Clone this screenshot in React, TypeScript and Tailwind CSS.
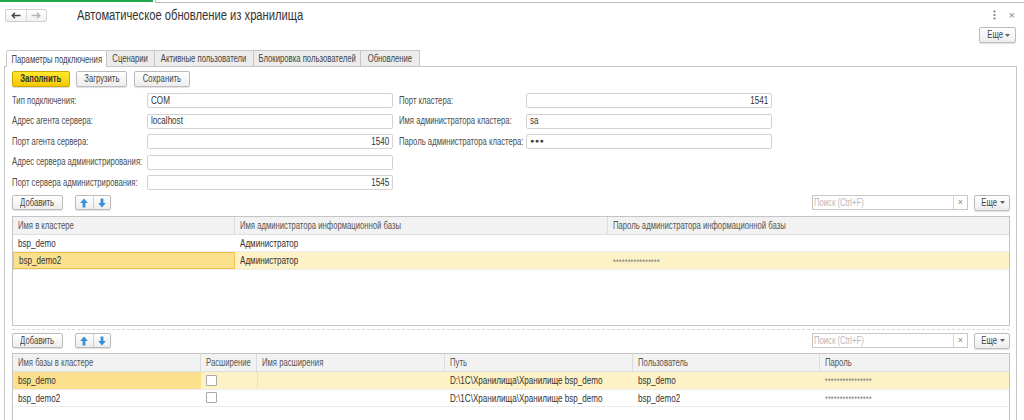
import React from 'react'

// text in the reference is noticeably condensed; squeeze it horizontally
function T({ children, o = 'l', className = '' }: { children: React.ReactNode; o?: 'l' | 'r' | 'c'; className?: string }) {
  const origin = o === 'l' ? 'origin-left' : o === 'r' ? 'origin-right' : 'origin-center'
  return <span className={'inline-block scale-x-[0.77] whitespace-nowrap ' + origin + ' ' + className}>{children}</span>
}

const btn =
  'flex h-[15px] items-center justify-center rounded-[2px] border border-[#bcbcbc] bg-gradient-to-b from-white to-[#ededed] text-[10px] leading-none text-[#444] shadow-[0_1px_1px_rgba(0,0,0,0.12)]'

function ArrowUp() {
  return (
    <svg width="8" height="10" viewBox="0 0 8 10">
      <path d="M4 0.5 L7.8 5 L5.4 5 L5.4 9.5 L2.6 9.5 L2.6 5 L0.2 5 Z" fill="#3a8fd9" />
    </svg>
  )
}

function ArrowDown() {
  return (
    <svg width="8" height="10" viewBox="0 0 8 10">
      <path d="M4 9.5 L7.8 5 L5.4 5 L5.4 0.5 L2.6 0.5 L2.6 5 L0.2 5 Z" fill="#3a8fd9" />
    </svg>
  )
}

function MoreButton({ className = '' }: { className?: string }) {
  return (
    <div className={btn + ' h-[16px] w-[36px] gap-[2px] ' + className}>
      <T o="c" className="-mr-[2px]">Еще</T>
      <svg width="5" height="3" viewBox="0 0 5 3">
        <path d="M0 0 L5 0 L2.5 3 Z" fill="#666" />
      </svg>
    </div>
  )
}

function Toolbar() {
  return (
    <div className="flex h-[15px] items-center">
      <div className={btn + ' w-[51px]'}>
        <T o="c">Добавить</T>
      </div>
      <div className="ml-[12px] flex h-[15px] w-[36px] rounded-[2px] border border-[#bcbcbc] bg-gradient-to-b from-white to-[#ededed] shadow-[0_1px_1px_rgba(0,0,0,0.12)]">
        <div className="flex flex-1 items-center justify-center border-r border-[#d0d0d0]">
          <ArrowUp />
        </div>
        <div className="flex flex-1 items-center justify-center">
          <ArrowDown />
        </div>
      </div>
      <div className="ml-auto flex h-[15px] w-[156px] border border-[#c8c8c8] bg-white">
        <div className="flex flex-1 items-center pl-[1px] text-[10px] text-[#b8b8b8]">
          <T>Поиск (Ctrl+F)</T>
        </div>
        <div className="flex w-[14px] items-center justify-center border-l border-[#d5d5d5] text-[9px] text-[#888]">×</div>
      </div>
      <MoreButton className="ml-[6px]" />
    </div>
  )
}

function Field({ label, value, right, lw, secret }: { label: string; value?: string; right?: boolean; lw: string; secret?: boolean }) {
  return (
    <div className="flex h-[15px] items-center">
      <div className={lw + ' text-[10px] leading-none text-[#4d4d4d]'}>
        <T>{label}</T>
      </div>
      <div
        className={
          'flex h-[15px] w-[246px] items-center rounded-[2px] border border-[#d2d2d2] bg-white px-[3px] text-[10.5px] text-[#333] ' +
          (right ? 'justify-end' : '')
        }
      >
        {secret ? (
          <span className="text-[7px] tracking-[0.5px] text-[#444]">●●●</span>
        ) : (
          <T o={right ? 'r' : 'l'}>{value}</T>
        )}
      </div>
    </div>
  )
}

const cell = 'flex items-center overflow-hidden px-[5px] text-[10.5px] leading-none'
const head = 'flex items-center overflow-hidden px-[5px] text-[10px] leading-none text-[#555] border-r border-[#dcdcdc]'
const stars = 'flex items-center overflow-hidden px-[5px] pt-[3px] text-[9px] leading-none tracking-[0.3px] text-[#777]'

export default function App() {
  return (
    <div className="relative h-[420px] w-[1024px] overflow-hidden bg-white font-['Liberation_Sans',Arial,sans-serif] text-[#333]">
      {/* top strip */}
      <div className="flex h-[3px]">
        <div className="h-[2px] w-[153px] bg-[#1ea84b]" />
        <div className="ml-[2px] flex-1 border-l border-b border-[#bdbdbd]" />
      </div>

      {/* title row */}
      <div className="flex h-[24px] items-center pl-[5px] pr-[9px]">
        <div className="flex h-[13px] w-[42px] rounded-[2px] border border-[#cfcfcf] bg-gradient-to-b from-white to-[#f1f1f1]">
          <div className="flex flex-1 items-center justify-center border-r border-[#dadada]">
            <svg width="10" height="7" viewBox="0 0 10 7">
              <path d="M9.5 3.5 H1.5 M4 0.8 L1.2 3.5 L4 6.2" stroke="#444" strokeWidth="1.4" fill="none" />
            </svg>
          </div>
          <div className="flex flex-1 items-center justify-center">
            <svg width="10" height="7" viewBox="0 0 10 7">
              <path d="M0.5 3.5 H8.5 M6 0.8 L8.8 3.5 L6 6.2" stroke="#b3b3b3" strokeWidth="1.4" fill="none" />
            </svg>
          </div>
        </div>
        <div className="ml-[30px] text-[14px] text-[#333]">
          <span className="inline-block origin-left scale-x-[0.8] whitespace-nowrap">Автоматическое обновление из хранилища</span>
        </div>
        <div className="ml-auto flex items-center gap-[13px] text-[#888]">
          <svg width="3" height="10" viewBox="0 0 3 10">
            <circle cx="1.5" cy="1.5" r="1.1" fill="#777" />
            <circle cx="1.5" cy="5" r="1.1" fill="#777" />
            <circle cx="1.5" cy="8.5" r="1.1" fill="#777" />
          </svg>
          <span className="text-[11px] leading-none">×</span>
        </div>
      </div>

      {/* more row */}
      <div className="flex h-[16px] justify-end pr-[8px]">
        <MoreButton className="w-[37px]" />
      </div>

      {/* tabs */}
      <div className="mt-[7px] flex h-[17px] pl-[6px]">
        <div className="z-10 flex h-[17px] w-[101px] items-center justify-center rounded-t-[2px] border border-b-0 border-[#c6c6c6] bg-white text-[10px] text-[#444]">
          <T o="c">Параметры подключения</T>
        </div>
        {[
          ['Сценарии', 'w-[48px]'],
          ['Активные пользователи', 'w-[99px]'],
          ['Блокировка пользователей', 'w-[107px]'],
          ['Обновление', 'w-[59px]'],
        ].map(([t, w]) => (
          <div
            key={t}
            className={
              w +
              ' flex h-[16px] items-center justify-center border border-l-0 border-b-0 border-[#c6c6c6] bg-[#ececec] text-[10px] text-[#444]'
            }
          >
            <T o="c">{t}</T>
          </div>
        ))}
      </div>

      {/* panel */}
      <div className="-mt-px ml-[4px] mr-[7px] h-[360px] border border-b-0 border-[#c6c6c6] pl-[7px] pr-[6px] pt-[4px]">
        <div className="flex h-[16px] items-center gap-[6px]">
          <div className="flex h-[16px] w-[58px] items-center justify-center rounded-[2px] border border-[#d2a800] bg-gradient-to-b from-[#ffe82a] to-[#f3c800] text-[10px] font-bold leading-none text-[#333] shadow-[0_1px_1px_rgba(0,0,0,0.15)]">
            <T o="c">Заполнить</T>
          </div>
          <div className={btn + ' h-[16px] w-[51px]'}>
            <T o="c">Загрузить</T>
          </div>
          <div className={btn + ' ml-[1px] h-[16px] w-[56px]'}>
            <T o="c">Сохранить</T>
          </div>
        </div>

        {/* form */}
        <div className="mt-[6px] flex">
          <div className="flex flex-col gap-[5.5px]">
            <Field lw="w-[135px]" label="Тип подключения:" value="COM" />
            <Field lw="w-[135px]" label="Адрес агента сервера:" value="localhost" />
            <Field lw="w-[135px]" label="Порт агента сервера:" value="1540" right />
            <Field lw="w-[135px]" label="Адрес сервера администрирования:" value="" />
            <Field lw="w-[135px]" label="Порт сервера администрирования:" value="1545" right />
          </div>
          <div className="ml-[6px] flex flex-col gap-[5.5px]">
            <Field lw="w-[127px]" label="Порт кластера:" value="1541" right />
            <Field lw="w-[127px]" label="Имя администратора кластера:" value="sa" />
            <Field lw="w-[127px]" label="Пароль администратора кластера:" secret />
          </div>
        </div>

        {/* table 1 */}
        <div className="mt-[5px]">
          <Toolbar />
        </div>
        <div className="mt-[6px] h-[110px] border border-[#c4c4c4]">
          <div className="grid h-[18px] grid-cols-[222px_373px_1fr] border-b border-[#dedede] bg-[#f2f2f2]">
            <div className={head}>
              <T>Имя в кластере</T>
            </div>
            <div className={head}>
              <T>Имя администратора информационной базы</T>
            </div>
            <div className={head + ' border-r-0'}>
              <T>Пароль администратора информационной базы</T>
            </div>
          </div>
          <div className="grid h-[17px] grid-cols-[222px_373px_1fr] border-b border-[#ececec]">
            <div className={cell}>
              <T>bsp_demo</T>
            </div>
            <div className={cell}>
              <T>Администратор</T>
            </div>
            <div className={cell} />
          </div>
          <div className="grid h-[18px] grid-cols-[222px_373px_1fr] border-b border-[#ececec] bg-[#fdf1c6]">
            <div className={cell + ' border border-[#f0c24e] bg-[#fbe08e]'}>
              <T>bsp_demo2</T>
            </div>
            <div className={cell}>
              <T>Администратор</T>
            </div>
            <div className={stars}>
              <T>****************</T>
            </div>
          </div>
        </div>

        <div className="mt-[3px] border-t border-dashed border-[#d8d8d8]" />

        {/* table 2 */}
        <div className="mt-[3px]">
          <Toolbar />
        </div>
        <div className="mt-[5px] h-[80px] border border-[#c4c4c4]">
          <div className="grid h-[18px] grid-cols-[188px_56px_188px_188px_187px_1fr] border-b border-[#dedede] bg-[#f2f2f2]">
            <div className={head}>
              <T>Имя базы в кластере</T>
            </div>
            <div className={head + ' px-[4px]'}>
              <T>Расширение</T>
            </div>
            <div className={head}>
              <T>Имя расширения</T>
            </div>
            <div className={head}>
              <T>Путь</T>
            </div>
            <div className={head}>
              <T>Пользователь</T>
            </div>
            <div className={head + ' border-r-0'}>
              <T>Пароль</T>
            </div>
          </div>
          {[
            ['bsp_demo', true],
            ['bsp_demo2', false],
          ].map(([name, sel]) => (
            <div
              key={name as string}
              className={
                'grid h-[17.5px] grid-cols-[188px_56px_188px_188px_187px_1fr] border-b border-[#ececec] ' +
                (sel ? 'bg-[#fdf1c6]' : '')
              }
            >
              <div className={cell + (sel ? ' bg-[#fbe08e]' : '')}>
                <T>{name as string}</T>
              </div>
              <div className={cell}>
                <div className="h-[11px] w-[11px] rounded-[1px] border border-[#a9a9a9] bg-white" />
              </div>
              <div className={cell + (sel ? ' border-l border-[#f3e3b0]' : '')} />
              <div className={cell}>
                <T>D:\1C\Хранилища\Хранилище bsp_demo</T>
              </div>
              <div className={cell}>
                <T>{name as string}</T>
              </div>
              <div className={stars}>
                <T>****************</T>
              </div>
            </div>
          ))}
        </div>
      </div>
    </div>
  )
}
